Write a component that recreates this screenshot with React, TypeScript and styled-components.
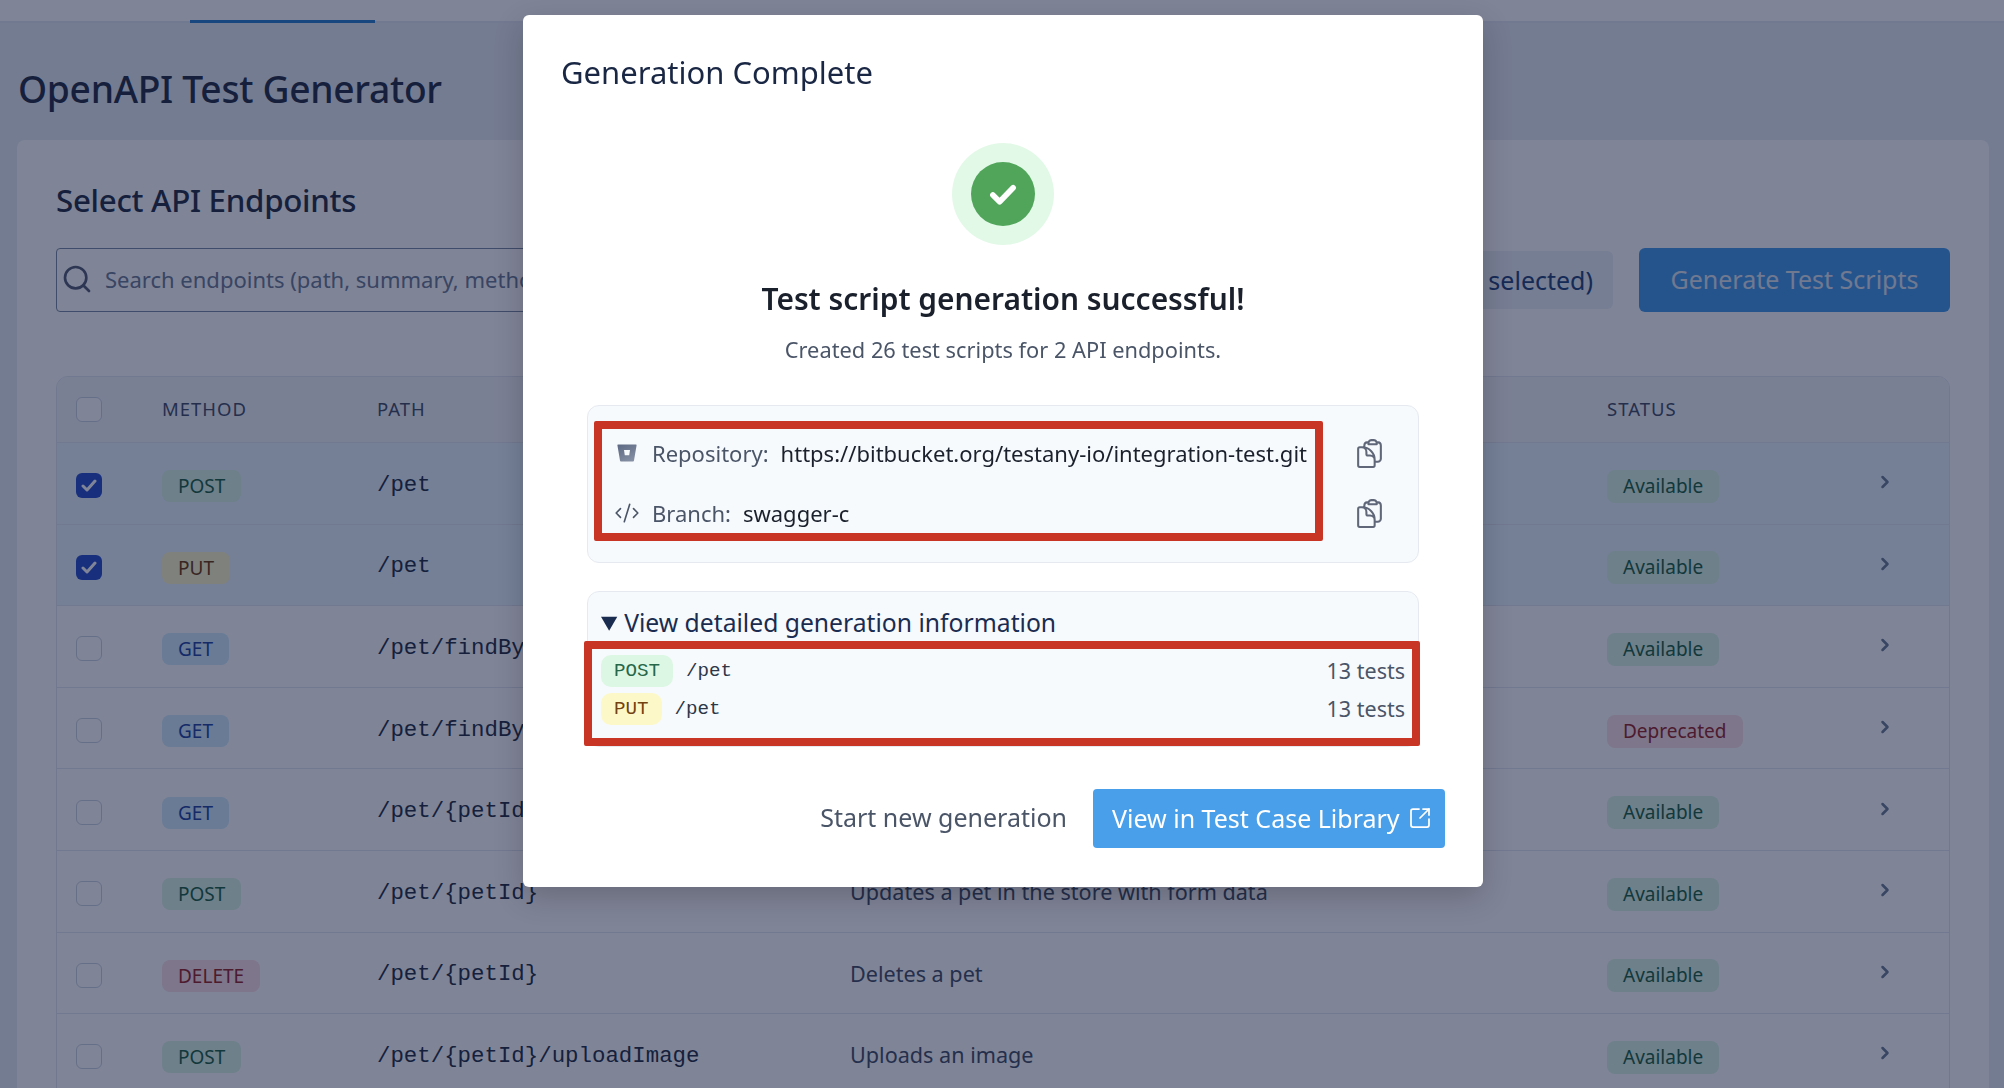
import { createGlobalStyle, styled } from 'styled-components';
import { HiOutlineClipboardDocument } from 'react-icons/hi2';
import { ChevronRight, CodeXml, Search, SquareArrowOutUpRight } from 'lucide-react';

type Method = 'GET' | 'POST' | 'PUT' | 'DELETE';

const methodColors: Record<Method, { bg: string; fg: string }> = {
  GET: { bg: '#d3ecfb', fg: '#2b4aa0' },
  POST: { bg: '#dcf7e3', fg: '#276749' },
  PUT: { bg: '#fdf8c8', fg: '#744210' },
  DELETE: { bg: '#fde3e6', fg: '#9b2c2c' },
};

const endpoints: { method: Method; path: string; summary: string; status: string; selected?: boolean }[] = [
  { method: 'POST', path: '/pet', summary: 'Add a new pet to the store', status: 'Available', selected: true },
  { method: 'PUT', path: '/pet', summary: 'Update an existing pet', status: 'Available', selected: true },
  { method: 'GET', path: '/pet/findByStatus', summary: 'Finds Pets by status', status: 'Available' },
  { method: 'GET', path: '/pet/findByTags', summary: 'Finds Pets by tags', status: 'Deprecated' },
  { method: 'GET', path: '/pet/{petId}', summary: 'Find pet by ID', status: 'Available' },
  { method: 'POST', path: '/pet/{petId}', summary: 'Updates a pet in the store with form data', status: 'Available' },
  { method: 'DELETE', path: '/pet/{petId}', summary: 'Deletes a pet', status: 'Available' },
  { method: 'POST', path: '/pet/{petId}/uploadImage', summary: 'Uploads an image', status: 'Available' },
];

const GlobalStyle = createGlobalStyle`
  html, body {
    margin: 0;
    height: 1088px;
    overflow: hidden;
    background: #e9eff5;
    font-family: "Noto Sans", "Open Sans", sans-serif;
  }
  * { box-sizing: border-box; }
`;

const Page = styled.div`
  height: 1088px;
  overflow: hidden;
  color: #2d3748;
`;

const TabBar = styled.div`
  height: 23px;
  padding-left: 190px;
  background: #fff;
  border-bottom: 2px solid #e2e8f0;
`;

const ActiveTab = styled.div`
  width: 185px;
  height: 23px;
  border-bottom: 3px solid #3182ce;
`;

const Title = styled.h1`
  margin: 0;
  padding: 41px 0 0 18px;
  height: 117px;
  font-size: 37.2px;
  line-height: 50px;
  font-weight: 500;
  letter-spacing: -0.3px;
`;

const Card = styled.section`
  margin: 0 15px 0 17px;
  padding: 40px 39px 0;
  background: #fff;
  border-radius: 8px 8px 0 0;
`;

const CardTitle = styled.h2`
  margin: 0;
  font-size: 31.3px;
  line-height: 40px;
  font-weight: 500;
  letter-spacing: -0.3px;
`;

const Toolbar = styled.div`
  display: flex;
  align-items: center;
  gap: 26px;
  margin-top: 28px;
`;

const SearchBox = styled.div`
  flex: 1;
  display: flex;
  align-items: center;
  gap: 12px;
  height: 64px;
  padding: 0 0 2px 4px;
  border: 1px solid #7f8ea6;
  border-radius: 4px;
  color: #718096;
  font-size: 22px;
`;

const SelectedPill = styled.div`
  display: flex;
  align-items: center;
  height: 58px;
  padding: 0 20px;
  background: #edf2f7;
  border-radius: 6px;
  color: #2c4a7c;
  font-size: 25px;
  white-space: nowrap;
`;

const GenerateButton = styled.button`
  width: 311px;
  height: 64px;
  padding: 0 0 2px;
  border: 0;
  border-radius: 6px;
  background: #4a9fea;
  color: #e2e8f0;
  font: inherit;
  font-size: 25px;
`;

const Table = styled.div`
  margin-top: 64px;
  border: 1px solid #e2e8f0;
  border-radius: 12px 12px 0 0;
  overflow: hidden;
`;

const Row = styled.div<{ $head?: boolean; $selected?: boolean }>`
  display: grid;
  grid-template-columns: 105px 215px 473px 757px 278px 1fr;
  align-items: center;
  height: ${p => (p.$head ? '66px' : '81.6px')};
  background: ${p => (p.$head ? '#f4f6f9' : p.$selected ? '#eaf7ff' : '#fff')};
  border-bottom: 1px solid #e2e8f0;
`;

const HeadCell = styled.div`
  margin-top: -3px;
  font-size: 18.5px;
  letter-spacing: 1px;
  color: #4a5568;
`;

const CheckCell = styled.div<{ $head?: boolean }>`
  padding-left: 19px;
  margin-top: ${p => (p.$head ? '0' : '5px')};
`;

const Checkbox = styled.div<{ $checked?: boolean }>`
  display: flex;
  align-items: center;
  justify-content: center;
  width: 26px;
  height: 25px;
  border-radius: 6px;
  border: ${p => (p.$checked ? '0' : '1.5px solid #cbd5e0')};
  background: ${p => (p.$checked ? '#2f55c9' : '#fff')};
`;

const PillCell = styled.div`
  margin-top: 6px;
`;

const MethodPill = styled.span<{ $method: Method }>`
  display: inline-block;
  padding: 0 16px;
  height: 32px;
  line-height: 32px;
  border-radius: 8px;
  font-size: 19px;
  background: ${p => methodColors[p.$method].bg};
  color: ${p => methodColors[p.$method].fg};
`;

const DetailPill = styled(MethodPill)`
  padding: 0 13px;
  border-radius: 10px;
  font-family: "Liberation Mono", monospace;
  font-size: 19.2px;
`;

const PathText = styled.div`
  justify-self: start;
  margin-top: 3px;
  font-family: "Liberation Mono", monospace;
  font-size: 22.4px;
  white-space: nowrap;
`;

const Summary = styled.div`
  justify-self: start;
  margin-top: 1px;
  font-size: 21.6px;
  color: #4a5568;
  white-space: nowrap;
`;

const StatusPill = styled.span<{ $bad?: boolean }>`
  display: inline-block;
  height: 33px;
  line-height: 33px;
  padding: 0 16px;
  border-radius: 8px;
  font-size: 19px;
  background: ${p => (p.$bad ? '#fde3e6' : '#dcf7e3')};
  color: ${p => (p.$bad ? '#9b2c2c' : '#276749')};
`;

const ChevronCell = styled.div`
  display: flex;
  color: #718096;
  margin: -2px 0 0 -10px;
`;

const Overlay = styled.div`
  position: fixed;
  inset: 0;
  background: rgba(0, 9, 47, 0.5);
`;

const Modal = styled.div`
  width: 960px;
  height: 872px;
  margin: 15px 0 0 523px;
  padding: 38px;
  background: #fff;
  border-radius: 6px;
  box-shadow: 0 10px 30px rgba(0, 0, 0, 0.2);
  display: flex;
  flex-direction: column;

  & > * { flex-shrink: 0; }
`;

const ModalTitle = styled.h3`
  margin: 0;
  height: 38px;
  font-size: 31px;
  line-height: 38px;
  font-weight: 400;
  color: #1a2744;
`;

const SuccessRing = styled.div`
  display: flex;
  align-items: center;
  justify-content: center;
  align-self: center;
  width: 102px;
  height: 102px;
  margin-top: 52px;
  border-radius: 50%;
  background: #e3f9e8;
`;

const SuccessDot = styled.div`
  display: flex;
  align-items: center;
  justify-content: center;
  width: 64px;
  height: 64px;
  border-radius: 50%;
  background: #50a55a;
`;

const SuccessTitle = styled.div`
  margin-top: 34px;
  text-align: center;
  font-size: 29.9px;
  line-height: 40px;
  font-weight: 600;
  color: #1a202c;
`;

const SuccessText = styled.div`
  margin-top: 16px;
  text-align: center;
  font-size: 21.8px;
  line-height: 30px;
  color: #4a5568;
`;

const InfoBox = styled.div`
  display: flex;
  align-items: flex-start;
  margin: 40px 26px 0;
  width: 832px;
  height: 158px;
  padding: 15px 0 0 6px;
  background: #f7fafc;
  border: 1px solid #e6eaf0;
  border-radius: 12px;
`;

const Highlight = styled.div`
  width: 729px;
  height: 120px;
  padding: 9px 0 0 11px;
  border: 8px solid #c93524;
  border-radius: 2px;
  display: flex;
  flex-direction: column;
  gap: 30px;
`;

const InfoRow = styled.div`
  display: flex;
  align-items: center;
  height: 30px;
  font-size: 22px;
  white-space: nowrap;
`;

const InfoIcon = styled.div`
  display: flex;
  justify-content: center;
  width: 28px;
  margin-right: 11px;
  color: #4a5568;
`;

const InfoLabel = styled.span`
  margin-right: 12px;
  color: #4a5568;
`;

const InfoValue = styled.span`
  color: #1a202c;
`;

const CopyColumn = styled.div`
  display: flex;
  flex-direction: column;
  gap: 27px;
  margin: 16px 0 0 30px;
  color: #5f6779;
`;

const Details = styled.details`
  position: relative;
  margin: 28px 26px 0;
  width: 832px;
  height: 156px;
  padding: 14px 0 0 13px;
  background: #f7fafc;
  border: 1px solid #e6eaf0;
  border-radius: 12px;
  font-size: 24.7px;
  color: #1a2c50;
`;

const DetailsSummary = styled.summary`
  line-height: 34px;
`;

const SummaryLabel = styled.span`
  margin-left: -3px;
`;

const DetailsBox = styled.div`
  position: absolute;
  left: -4px;
  top: 49px;
  width: 836px;
  height: 105px;
  padding: 6px 6px 0 9px;
  border: 8px solid #c93524;
  border-radius: 2px;
  background: #f7fafc;
  display: flex;
  flex-direction: column;
  gap: 6px;
`;

const DetailRow = styled.div`
  display: flex;
  align-items: center;
  height: 32px;
`;

const DetailPath = styled.span`
  flex: 1;
  margin-left: 13px;
  font-family: "Liberation Mono", monospace;
  font-size: 19.2px;
  color: #2d3748;
`;

const DetailCount = styled.span`
  margin: -2px 1px 0 0;
  font-size: 21.5px;
  color: #4a5568;
`;

const Actions = styled.div`
  display: flex;
  justify-content: flex-end;
  align-items: center;
  gap: 26px;
  margin-top: 42px;
`;

const GhostButton = styled.button`
  border: 0;
  padding: 0 0 4px;
  background: none;
  font: inherit;
  font-size: 25px;
  color: #4a5568;
`;

const PrimaryButton = styled.button`
  display: flex;
  align-items: center;
  gap: 8px;
  width: 352px;
  height: 59px;
  padding: 0 0 2px 19px;
  border: 0;
  border-radius: 4px;
  background: #4a9fea;
  color: #fff;
  font: inherit;
  font-size: 25px;
  white-space: nowrap;
`;

function BitbucketIcon() {
  return (
    <svg width="20" height="18" viewBox="0 0 20 18">
      <defs>
        <linearGradient id="bucket" x1="0.2" y1="0" x2="0.8" y2="1">
          <stop offset="0" stopColor="#5f6b85" />
          <stop offset="1" stopColor="#8791a6" />
        </linearGradient>
      </defs>
      <path
        fillRule="evenodd"
        d="M1 0.5h18a.6.6 0 0 1 .6.7L17 16.6a1 1 0 0 1-1 .9H4a1 1 0 0 1-1-.9L.4 1.2A.6.6 0 0 1 1 .5zM7 6l.8 5.2h4.4L13 6z"
        fill="url(#bucket)"
      />
    </svg>
  );
}

export default function App() {
  return (
    <>
      <GlobalStyle />
      <Page>
        <TabBar>
          <ActiveTab />
        </TabBar>
        <Title>OpenAPI Test Generator</Title>
        <Card>
          <CardTitle>Select API Endpoints</CardTitle>
          <Toolbar>
            <SearchBox>
              <Search size={32} strokeWidth={2} color="#5a6478" />
              Search endpoints (path, summary, method...)
            </SearchBox>
            <SelectedPill>Clear selection (2 selected)</SelectedPill>
            <GenerateButton>Generate Test Scripts</GenerateButton>
          </Toolbar>
          <Table>
            <Row $head>
              <CheckCell $head>
                <Checkbox />
              </CheckCell>
              <HeadCell>METHOD</HeadCell>
              <HeadCell>PATH</HeadCell>
              <HeadCell>SUMMARY</HeadCell>
              <HeadCell>STATUS</HeadCell>
            </Row>
            {endpoints.map(e => (
              <Row key={e.method + e.path} $selected={e.selected}>
                <CheckCell>
                  <Checkbox $checked={e.selected}>
                    {e.selected && (
                      <svg width="16" height="13" viewBox="0 0 16 13">
                        <path d="M2 7l4 4 8-9" fill="none" stroke="#fff" strokeWidth="3" strokeLinecap="round" strokeLinejoin="round" />
                      </svg>
                    )}
                  </Checkbox>
                </CheckCell>
                <PillCell>
                  <MethodPill $method={e.method}>{e.method}</MethodPill>
                </PillCell>
                <PathText>{e.path}</PathText>
                <Summary>{e.summary}</Summary>
                <PillCell>
                  <StatusPill $bad={e.status === 'Deprecated'}>{e.status}</StatusPill>
                </PillCell>
                <ChevronCell>
                  <ChevronRight size={20} strokeWidth={3} />
                </ChevronCell>
              </Row>
            ))}
          </Table>
        </Card>
      </Page>
      <Overlay>
        <Modal>
          <ModalTitle>Generation Complete</ModalTitle>
          <SuccessRing>
            <SuccessDot>
              <svg width="32" height="27" viewBox="0 0 28 24">
                <path d="M5 12.5l6 6L23 6" fill="none" stroke="#fff" strokeWidth="5" strokeLinecap="round" strokeLinejoin="round" />
              </svg>
            </SuccessDot>
          </SuccessRing>
          <SuccessTitle>Test script generation successful!</SuccessTitle>
          <SuccessText>Created 26 test scripts for 2 API endpoints.</SuccessText>
          <InfoBox>
            <Highlight>
              <InfoRow>
                <InfoIcon>
                  <BitbucketIcon />
                </InfoIcon>
                <InfoLabel>Repository:</InfoLabel>
                <InfoValue>https://bitbucket.org/testany-io/integration-test.git</InfoValue>
              </InfoRow>
              <InfoRow>
                <InfoIcon>
                  <CodeXml size={26} strokeWidth={1.5} />
                </InfoIcon>
                <InfoLabel>Branch:</InfoLabel>
                <InfoValue>swagger-c</InfoValue>
              </InfoRow>
            </Highlight>
            <CopyColumn>
              <HiOutlineClipboardDocument size={33} />
              <HiOutlineClipboardDocument size={33} />
            </CopyColumn>
          </InfoBox>
          <Details open>
            <DetailsSummary>
              <SummaryLabel>View detailed generation information</SummaryLabel>
            </DetailsSummary>
            <DetailsBox>
              <DetailRow>
                <DetailPill $method="POST">POST</DetailPill>
                <DetailPath>/pet</DetailPath>
                <DetailCount>13 tests</DetailCount>
              </DetailRow>
              <DetailRow>
                <DetailPill $method="PUT">PUT</DetailPill>
                <DetailPath>/pet</DetailPath>
                <DetailCount>13 tests</DetailCount>
              </DetailRow>
            </DetailsBox>
          </Details>
          <Actions>
            <GhostButton>Start new generation</GhostButton>
            <PrimaryButton>
              View in Test Case Library
              <SquareArrowOutUpRight size={24} strokeWidth={1.75} />
            </PrimaryButton>
          </Actions>
        </Modal>
      </Overlay>
    </>
  );
}
